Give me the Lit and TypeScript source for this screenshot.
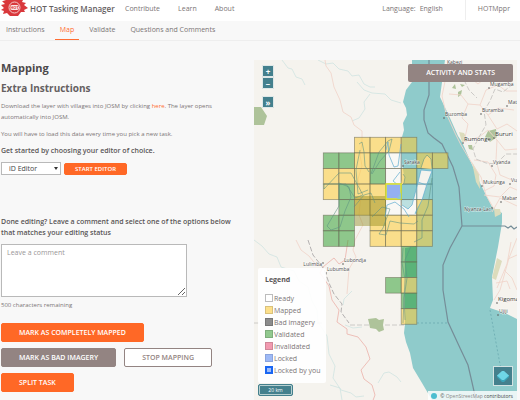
import { LitElement, html, svg, css } from "lit";
import { customElement, state } from "lit/decorators.js";

type Kind = "ready" | "mapped" | "bad" | "validated" | "invalidated" | "locked" | "mine";

const LEGEND: { kind: Kind; label: string }[] = [
  { kind: "ready", label: "Ready" },
  { kind: "mapped", label: "Mapped" },
  { kind: "bad", label: "Bad imagery" },
  { kind: "validated", label: "Validated" },
  { kind: "invalidated", label: "Invalidated" },
  { kind: "locked", label: "Locked" },
  { kind: "mine", label: "Locked by you" },
];

// One string per grid row: m mapped, v validated, r ready, w outlined only, . none
const TASKS = [
  "..mmmm..",
  "vvmvrwmm",
  "mmmvrmw.",
  "mvmmrww.",
  ".vmmrrm.",
  "vv.mmmm.",
  "vv.mmmm.",
  ".....v..",
  ".....v..",
  "....vm..",
  ".....v..",
  ".....m..",
];
const CELL = 15.58;
const KIND: Record<string, string> = { m: "mapped", v: "validated", r: "ready", w: "open" };

const PLACES: { x: number; y: number; name: string; strong?: boolean; end?: boolean }[] = [
  { x: 447, y: 64, name: "Kabezi" },
  { x: 490, y: 86, name: "Mugamba" },
  { x: 508, y: 104, name: "Matana" },
  { x: 445, y: 116, name: "Buzomba" },
  { x: 482, y: 112, name: "Buramba" },
  { x: 495, y: 136, name: "Bururi", strong: true },
  { x: 464, y: 141, name: "Rumonge", strong: true },
  { x: 493, y: 164, name: "Vyanda" },
  { x: 483, y: 184, name: "Mukunga" },
  { x: 511, y: 182, name: "Vugizo" },
  { x: 502, y: 200, name: "Mabanda" },
  { x: 491, y: 211, name: "Nyanza-Lac", end: true },
  { x: 404, y: 164, name: "Saraka" },
  { x: 322, y: 266, name: "Lulimba", end: true },
  { x: 344, y: 262, name: "Lubondja" },
  { x: 327, y: 271, name: "Lubumba" },
  { x: 498, y: 301, name: "Kigoma", strong: true },
  { x: 499, y: 313, name: "Ujiji" },
];

@customElement("task-map")
class TaskMap extends LitElement {
  static styles = css`
    :host {
      display: block;
      position: relative;
      overflow: hidden;
      background: #f5f3ee;
      font-family: "Open Sans", "Noto Sans", sans-serif;
      color: #68707f;
    }
    .canvas {
      position: absolute;
      inset: 0;
      width: 100%;
      height: 100%;
    }
    .water { fill: #8fcbcb; }
    .green { fill: #aec39a; }
    .sand { fill: #dcdcbc; }
    .stream { fill: none; stroke: #cfe3e1; stroke-width: 0.8; }
    .road { fill: none; stroke: #f0d6cc; stroke-width: 0.9; }
    .main-road { fill: none; stroke: #eebfb8; stroke-width: 1; }
    .rail { fill: none; stroke: #b4b1b1; stroke-width: 1; stroke-dasharray: 5 2; }
    .border { fill: none; stroke: #758d98; stroke-width: 1.2; }
    .limit { fill: none; stroke: #c2bfbc; stroke-width: 0.8; stroke-dasharray: 5 2; }
    .ferry { fill: none; stroke: #69aab0; stroke-width: 0.8; stroke-dasharray: 2 2; }
    .cell { stroke: #6b6b58; stroke-width: 0.8; stroke-opacity: 0.65; }
    .cell.mapped { fill: #ffcc33; fill-opacity: 0.53; }
    .cell.validated { fill: #289b28; fill-opacity: 0.5; }
    .cell.ready { fill: #ffffff; fill-opacity: 0.4; }
    .cell.open { fill: none; stroke: #4f8792; }
    .mine-cell { fill: #94b0f0; stroke: #e6ec20; stroke-width: 1.4; }
    .shade { fill: #8a8416; fill-opacity: 0.42; }
    .area { fill: none; stroke: #5c9282; stroke-width: 0.8; stroke-opacity: 0.7; }
    .area.blue { stroke: #5fadd0; stroke-width: 1; }
    .area.sandy { fill: #f7da83; }
    .land { fill: #f5f3ee; }
    .dot { fill: #555555; }
    .place { font-size: 5px; fill: #4c4c4c; stroke: #ffffff; stroke-width: 1; stroke-opacity: 0.6; paint-order: stroke; }
    .place.strong { font-size: 6px; fill: #333333; }
    .place.end { text-anchor: end; }
    .controls {
      position: absolute;
      left: 8px;
      top: 5px;
      display: flex;
      flex-direction: column;
    }
    .control {
      width: 12px;
      height: 12px;
      padding: 0;
      border: 1px solid #dfe8e8;
      border-radius: 1px;
      box-sizing: border-box;
      background: #44808d;
      color: #ffffff;
      font: 700 8px/9px "Open Sans", sans-serif;
    }
    .control.jump { margin-top: 7px; }
    .stats {
      position: absolute;
      top: 4px;
      right: 4px;
      height: 18px;
      padding: 0 18px;
      border: 0;
      border-radius: 2px;
      background: #938482;
      color: #ffffff;
      font: 600 7px/18px "Open Sans", sans-serif;
    }
    .legend {
      position: absolute;
      left: 4px;
      bottom: 17px;
      width: 68px;
      box-sizing: border-box;
      padding: 6px 7px 7px;
      border-radius: 2px;
      background: rgba(255, 255, 255, 0.9);
    }
    .legend h3 {
      margin: 0 0 6px;
      font-size: 7px;
      line-height: 12px;
      color: #595556;
    }
    .legend ul { margin: 0; padding: 0; list-style: none; }
    .legend li {
      display: flex;
      align-items: center;
      gap: 1px;
      height: 12px;
      font-size: 7px;
      white-space: nowrap;
      color: #7c7576;
    }
    .swatch {
      flex: none;
      width: 8px;
      height: 8px;
      box-sizing: border-box;
      border: 1px solid #bcbcbc;
      background: #ffffff;
    }
    .swatch.mapped { background: #fde08b; border-color: #d9c17c; }
    .swatch.bad { background: #8c8c8c; border-color: #777777; }
    .swatch.validated { background: #92c98f; border-color: #7fae7c; }
    .swatch.invalidated { background: #f29ab0; border-color: #cf8798; }
    .swatch.locked { background: #9db9f6; border-color: #8ba4dc; }
    .swatch.mine { background: #9dbcfb; border: 2px solid #1a66f2; }
    .scale {
      position: absolute;
      left: 4px;
      bottom: 4px;
      width: 35px;
      height: 12px;
      box-sizing: border-box;
      border: 1px solid #44808d;
      outline: 1px solid #b7cfd0;
      outline-offset: -2px;
      border-radius: 2px;
      background: #44808d;
      color: #ffffff;
      font-size: 5px;
      line-height: 10px;
      text-align: center;
    }
    .credit {
      position: absolute;
      right: 0;
      bottom: 0;
      display: flex;
      align-items: center;
      gap: 3px;
      height: 9px;
      padding: 0 4px 0 3px;
      background: rgba(255, 255, 255, 0.8);
      font-size: 5px;
      white-space: nowrap;
      color: #444444;
    }
    .credit a { color: #8a8a8a; text-decoration: none; }
    .bullet { width: 6px; height: 6px; border-radius: 50%; background: #4bbdd0; }
    .layers {
      position: absolute;
      right: 4px;
      bottom: 14px;
      width: 20px;
      height: 20px;
      padding: 0;
      border: 1px solid #d3e3e3;
      background: #44808d;
    }
    .layers svg { display: block; width: 18px; height: 18px; }
  `;

  render() {
    return html`
      <svg class="canvas" viewBox="254 60 263 340" preserveAspectRatio="xMidYMin slice" role="img" aria-label="Task grid">
        <path class="stream" d="M282 60l6 8 4 1 4 8 6 2 3 6M318 60l8 4 7-1 6 6 9 2 4 5 7-1 5 9 6 3 5 0M357 82l7 8 8 3 13 1 6 6 10 3M370 94l-6 8 1 7-6 9-7 3M254 240l8 6 7 8 8 3 4 10 13 4 5 10 9 6 4 14 5 9 1 12 9 14 2 18 6 12-2 12 8 12 10 3 5 4 8-1M345 325l8 3 9-1M378 383l6-10 5-1 8 5 4 5M352 291l-8 8-1 6M330 385l10 3 2 12M283 320l-8-6-4-14 8-5"></path>
        <path class="road" d="M325 60l1 6 5 7 3 14 6 13 3 12 8 5 3 8 8 6v12l-2 12 2 11-4 13 3 14-2 22 4 10-8 15-2 10 3 7-7 12-2 25M296 240l5 10 8 6 8 10"></path>
        <path class="main-road" d="M348 240l-3 20-6 4-5-6-5 4-6 5-3 6 9 13 3 14 7 10-2 12 10 7v5l11 3 8 10 4 12-9 11 3 9 8 6 3 10-3 8 4 8-2 20"></path>
        <path class="rail" d="M308 240l5 15 11 14 5 14 5 11 8 10-1 8 8 11"></path>
        <path class="limit" d="M254 323h70M350 325h57"></path>
        <path class="green" d="M254 107h7l6 9-3 9h-10zM368 319l8-1 3 2 5-1-1 6 1 5-5 2-3-3-6-1-1-5z"></path>
        <path class="water" d="M412 60V82L406 90L403 102L406 108L407 115L403 123L404 130L402 137V163L404 176L401 184L399 193V199L403 207L417 214V246L405 248V324L404 333L406 342L410 353L413 368L422 383L432 400H517V319L505 313L490 308L493 300L492 277L498 247L502 223V213L492 207L480 183L473 167L462 142L458 136L450 118L440 97L445 60Z"></path>
        <path class="land" d="M386 199H401L402 205L408 209L412 205L417 186L421 170L432 171L427 184L422 200L415 212L414 216H386Z"></path>
        <path class="sand" d="M472 162l7 12 1 15-4-7zM459 132l5 1 4 8-6 1zM497 258l5 3-6 19-4-2zM494 209h6l1 5-6 3z"></path>
        <path class="green" d="M488 131l8-2 1 8-7 5-5-5zM452 88l3-4 1 5zM460 84l5 1-3 2zM458 92l4-2-1 5-3 2zM468 145l4 0 1 5-4-1z"></path>
        <path class="road" d="M449 62l-7 34 4 17 9 20 6 12 12 20 8 12 5 18 8 14M456 80l12-4 10 8 11-9 7 6 10-8M449 94l12 1 7 9 12 1 8 10 10-7 16 2M468 104l-6 14 6 6-4 18M480 105l6-15 12-5 8 6 11 0M488 115l9 14 10-5 10 7M463 142l16-5 9-7 9 10 8 10 12-1M497 140l-1 20 4 15 12 5M474 160l14 2 8 13-2 11-10 5M484 195l16 2 10-10 7 3M492 212l8-14 17 8M502 65l-6 8 4 10M483 70l-6 5"></path>
        <path class="limit" d="M513 84l-10 8-8-3-5 12-6 10 2 14-7 12-6 12 3 10 10 4 10 1 10-10 11 0M464 80l5 10 8 8"></path>
        <path class="road" d="M517 238l-8 20-5 18-4 14-6 10M511 242l-4 22-10 24M504 270l8 8 5 12M496 283l11-2 3 8M517 255l-9 4M498 297l9 5 10-3"></path>
        <path class="border" d="M429 60V95L424 110V120L428 133L434 138L442 144L453 167L459 187L462 226H505L508 228L511 226L514 229L517 227M462 226L450 248L443 265V290L448 322L460 348L468 365L471 378L476 400"></path>
        <path class="ferry" d="M490 310l14 76M417 323h32"></path>
        ${TASKS.map((row, r) =>
          [...row].map((code, c) =>
            code === "."
              ? ""
              : svg`<rect class="cell ${KIND[code]}" x=${323.3 + c * CELL} y=${137.3 + r * CELL} width=${CELL} height=${CELL}></rect>`,
          ),
        )}
        <rect class="shade" x="355" y="196" width="31" height="30"></rect>
        <path class="area sandy" d="M421 168l3-9 3-4 4 4 1 10M403 174l2 3-1 6-3 3"></path>
        <path class="area blue" d="M421 170L432 171L427 184L422 200L415 214M421 170L417 186L412 205L408 209L402 205M418 182l8 3M388 142l1 13 5 12 4-1 3-22M388 142l-2 8M400 172l-7 9 5 4M385 217l2-12 8-3 9 7 5 8"></path>
        <path class="area" d="M324 189l15-16 12 0 12 22-8 3-9-14-22 0zM339 183l10 4 2 10-6 14-5 16-9 3-4-4 12-20zM359 144l3-2 2 10 1 14 4 6M360 150l-4 20 2 24 10-4M371 174l8-22 9-11 4-2-3 12-9 10-8 13M354 207l10-12 7-2 4 10M372 217l10-10 8 2-7 19-4 6 7 1 4-14 10 2 14 1 4-3M432 178l-4 28-6 14 0 18-8 4"></path>
        <path class="area" d="M403 248l-1 15 3 16-1 20-1 24M411 246l-6 14 2 18-3 20 1 22"></path>
        <rect class="mine-cell" x="386" y="184" width="15" height="15"></rect>
        <path class="water" d="M397 199l4-7v7z"></path>
        ${PLACES.map(
          (p) => svg`
            <circle class="dot" cx=${p.end ? p.x + 1 : p.x - 1} cy=${p.end ? p.y - 3 : p.y + 2} r="0.8"></circle>
            <text class="place ${p.strong ? "strong" : ""} ${p.end ? "end" : ""}" x=${p.x} y=${p.y}>${p.name}</text>`,
        )}
      </svg>
      <div class="controls">
        <button class="control" aria-label="Zoom in">+</button>
        <button class="control" aria-label="Zoom out">−</button>
        <button class="control jump" aria-label="Overview map">»</button>
      </div>
      <button class="stats">ACTIVITY AND STATS</button>
      <div class="legend">
        <h3>Legend</h3>
        <ul>
          ${LEGEND.map((l) => html`<li><span class="swatch ${l.kind}"></span>${l.label}</li>`)}
        </ul>
      </div>
      <div class="scale">20 km</div>
      <button class="layers" aria-label="Layers">
        <svg viewBox="0 0 18 18">
          <path fill="#3aa3b8" d="M3 8l0 2 5 5h2l5-5v-2z"></path>
          <path fill="#6fd6e6" d="M8 4h2l5 4.500-5 4.500h-2l-5-4.500z"></path>
        </svg>
      </button>
      <div class="credit"><span class="bullet"></span><span>© <a href="#osm">OpenStreetMap</a> contributors</span></div>
    `;
  }
}

@customElement("app-root")
class AppRoot extends LitElement {
  @state() private comment = "";

  static styles = css`
    :host {
      display: flex;
      flex-direction: column;
      min-height: 100vh;
      background: #f8f8f8;
      font-family: "Open Sans", "Noto Sans", sans-serif;
      font-size: 6px;
      color: #7b7576;
    }
    a { color: inherit; text-decoration: none; }
    .top {
      display: flex;
      align-items: flex-start;
      height: 21px;
      background: #ffffff;
      font-size: 7px;
      line-height: 17px;
      white-space: nowrap;
    }
    .logo { flex: none; width: 28px; height: 18px; }
    .brand { width: 92px; margin-left: 2px; font-size: 8px; font-weight: 600; color: #656061; }
    .links { display: flex; gap: 18px; margin-left: 3px; }
    .language { margin-left: auto; display: flex; gap: 4px; padding-right: 22px; }
    .user { height: 20px; padding: 0 10px 0 12px; border-left: 1px solid #eeeeee; }
    .tabs {
      display: flex;
      gap: 5px;
      height: 19px;
      padding-left: 1px;
      border-bottom: 1px solid #eeeeee;
      font-size: 7px;
      line-height: 17px;
    }
    .tabs a { padding: 0 5px; }
    .tabs .current { color: #ff6d33; border-bottom: 1px solid #ff6d33; }
    .work { flex: 1; display: flex; padding: 19px 3px 0 1px; }
    .panel { flex: 0 0 253px; box-sizing: border-box; padding-right: 14px; }
    task-map { flex: 1; min-width: 0; }
    h1 { margin: 0 0 4px; font-size: 11px; line-height: 16px; color: #4c484a; }
    h2 { margin: 0 0 5px; font-size: 10px; line-height: 16px; color: #656061; }
    p { margin: 0 0 6px; line-height: 11px; }
    p + p { margin-bottom: 5px; }
    p a { color: #ff6d33; }
    h3 { margin: 0; font-size: 7px; font-weight: 600; line-height: 11px; color: #595556; }
    .editor { display: flex; align-items: center; gap: 3px; margin: 6px 0 41px; }
    .picker { position: relative; display: flex; }
    .picker::after {
      content: "";
      position: absolute;
      right: 3px;
      top: 5px;
      border: 2px solid transparent;
      border-top: 3px solid #333333;
      border-bottom: 0;
      pointer-events: none;
    }
    select {
      appearance: none;
      width: 60px;
      height: 13px;
      padding: 0 7px;
      border: 1px solid #b9b9b9;
      border-radius: 0;
      background: #ffffff;
      font: 7px "Open Sans", sans-serif;
      color: #444444;
    }
    button {
      height: 19px;
      padding: 0 17px;
      border: 1px solid #ff6826;
      border-radius: 2px;
      background: #ff6826;
      color: #ffffff;
      font: 600 7px "Open Sans", sans-serif;
      white-space: nowrap;
    }
    .small { height: 12px; padding: 0 10px; font-size: 6px; }
    .grey { background: #938482; border-color: #938482; }
    .outline { background: #ffffff; border-color: #938482; color: #938482; }
    textarea {
      display: block;
      width: 186px;
      height: 53px;
      box-sizing: border-box;
      margin: 6px 0 4px;
      padding: 3px 5px;
      border: 1px solid #b9b9b9;
      background: #ffffff;
      font: 7px/10px "Open Sans", sans-serif;
      color: #444444;
    }
    textarea::placeholder { color: #9a9697; opacity: 1; }
    .actions { display: flex; flex-wrap: wrap; gap: 6px 8px; margin-top: 14px; }
    .first { margin-right: 60px; }
  `;

  render() {
    return html`
      <header class="top">
        <svg class="logo" viewBox="0 0 28 18" aria-hidden="true">
          <path fill="#d9383c" d="M3 0h20l-1 2 4 1-2 2 4 3-4 2 1 2-4 0-3 4H10l-3-3-4 1 1-3-3-1 3-2-3-3 4-1-3-3 4 0z"></path>
          <circle cx="14.500" cy="7.500" r="5.500" fill="#d9383c" stroke="#f6c8c8" stroke-width="1"></circle>
          <rect x="10" y="5" width="9" height="5" rx="2" fill="#fbe6e6"></rect>
          <text x="14.500" y="9" text-anchor="middle" font-size="4" font-weight="700" fill="#d9383c">HOT</text>
        </svg>
        <span class="brand">HOT Tasking Manager</span>
        <nav class="links"><a href="#contribute">Contribute</a><a href="#learn">Learn</a><a href="#about">About</a></nav>
        <div class="language"><span>Language:</span><a href="#language">English</a></div>
        <a class="user" href="#user">HOTMppr</a>
      </header>
      <nav class="tabs">
        <a href="#instructions">Instructions</a>
        <a class="current" href="#map">Map</a>
        <a href="#validate">Validate</a>
        <a href="#questions">Questions and Comments</a>
      </nav>
      <main class="work">
        <section class="panel">
          <h1>Mapping</h1>
          <h2>Extra Instructions</h2>
          <p>Download the layer with villages into JOSM by clicking <a href="#layer">here</a>. The layer opens automatically into JOSM.</p>
          <p>You will have to load this data every time you pick a new task.</p>
          <h3><label for="editor">Get started by choosing your editor of choice.</label></h3>
          <div class="editor">
            <span class="picker"><select id="editor"><option>iD Editor</option><option>JOSM</option></select></span>
            <button class="small">START EDITOR</button>
          </div>
          <h3><label for="comment">Done editing? Leave a comment and select one of the options below that matches your editing status</label></h3>
          <textarea
            id="comment"
            maxlength="500"
            placeholder="Leave a comment"
            .value=${this.comment}
            @input=${(e: Event) => (this.comment = (e.target as HTMLTextAreaElement).value)}
          ></textarea>
          <div>${500 - this.comment.length} characters remaining</div>
          <div class="actions">
            <button class="first">MARK AS COMPLETELY MAPPED</button>
            <button class="grey">MARK AS BAD IMAGERY</button>
            <button class="outline">STOP MAPPING</button>
            <button>SPLIT TASK</button>
          </div>
        </section>
        <task-map></task-map>
      </main>
    `;
  }
}
